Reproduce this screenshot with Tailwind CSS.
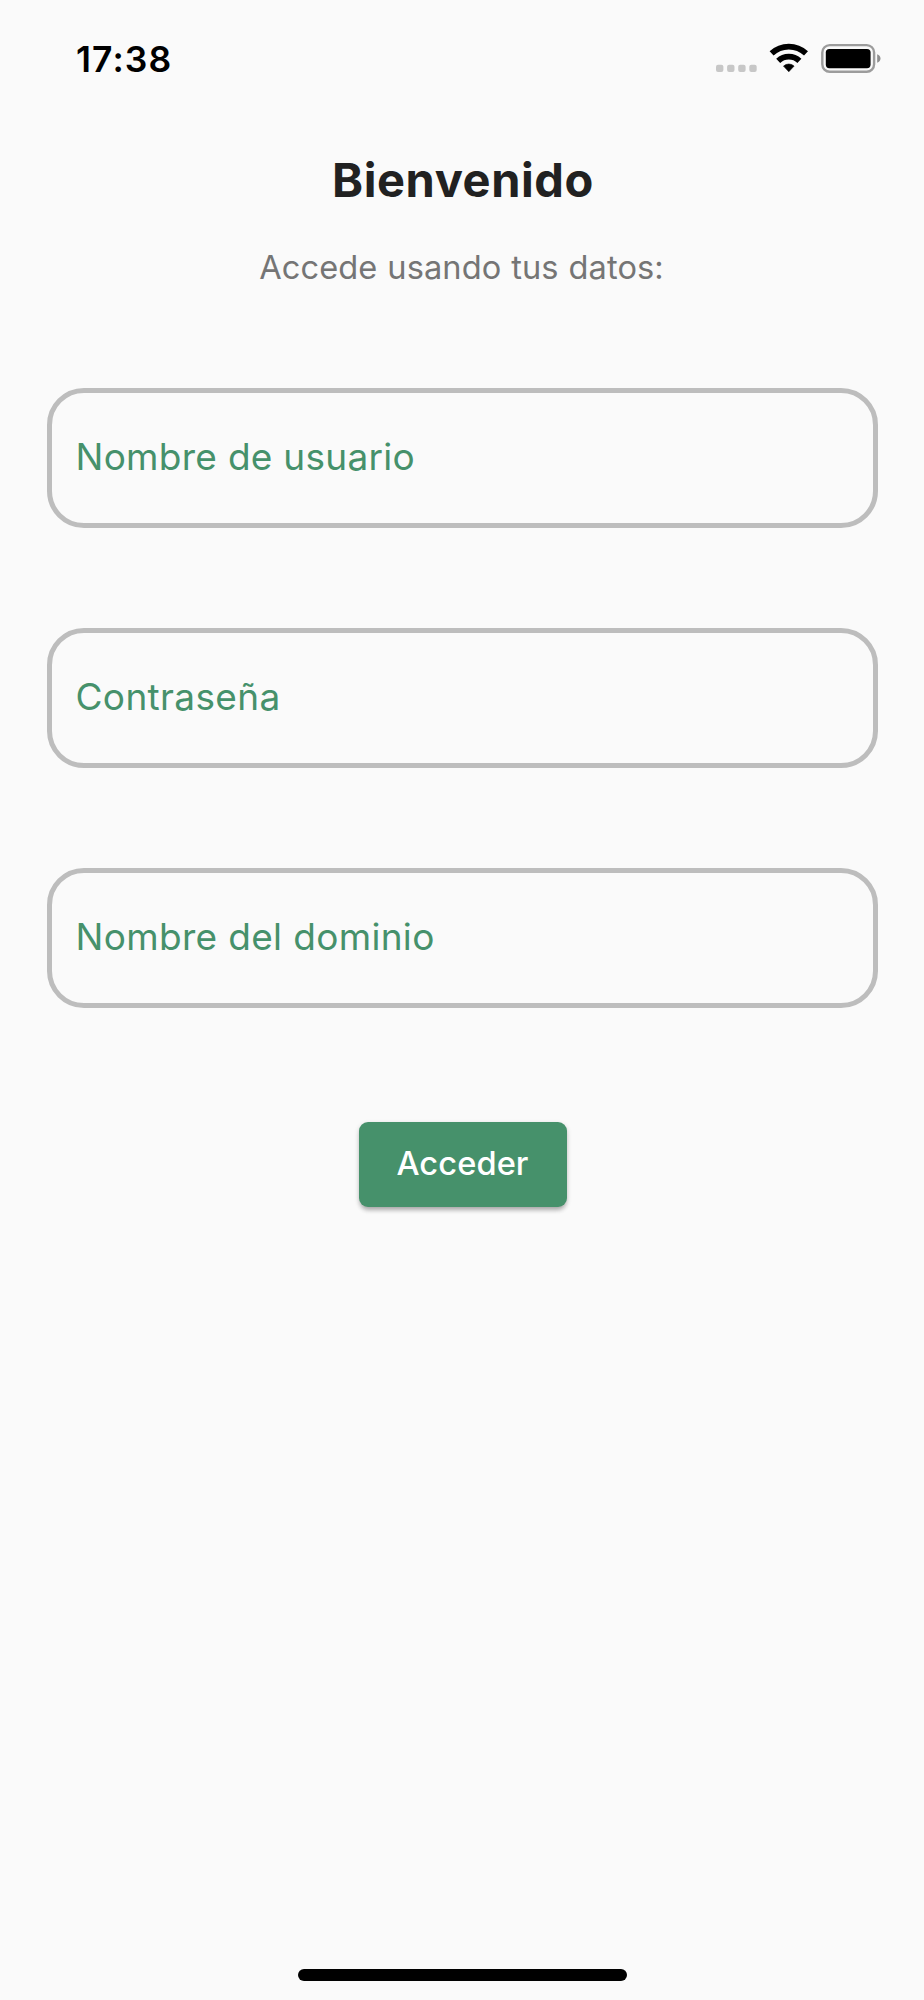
<!DOCTYPE html>
<html lang="es">
<head>
  <meta charset="UTF-8" />
  <meta name="viewport" content="width=device-width, initial-scale=1.0" />
  <title>Bienvenido</title>
  <script src="https://cdn.jsdelivr.net/npm/@tailwindcss/browser@4"></script>
</head>
<body class="bg-[#fafafa] font-['Inter',sans-serif]">
  <div class="flex flex-col w-full h-[2000px] overflow-hidden">

    <!-- Barra de estado -->
    <header class="flex items-center justify-between h-[118px] pl-[76px] pr-[42px]">
      <span class="pt-0.5 text-[35.5px] leading-none font-semibold tracking-[1.08px] text-black">17:38</span>
      <svg class="w-[166px] h-[30px] mb-0.5" viewBox="0 0 166 30">
        <!-- Señal -->
        <g fill="#c7c7c7">
          <rect x="0" y="21.7" width="7.4" height="7.3" rx="2" />
          <rect x="11.1" y="21.7" width="7.4" height="7.3" rx="2" />
          <rect x="22.2" y="21.7" width="7.4" height="7.3" rx="2" />
          <rect x="33.3" y="21.7" width="7.4" height="7.3" rx="2" />
        </g>
        <!-- Wifi -->
        <g fill="none" stroke="#000">
          <path d="M55.6 10.4a25.2 25.2 0 0 1 34.4 0" stroke-width="5.8" />
          <path d="M62.2 17.9a15.4 15.4 0 0 1 21.2 0" stroke-width="5.8" />
        </g>
        <path d="M72.8 28.7l-5.3-5.6a7.8 7.8 0 0 1 10.6 0z" fill="#000" stroke="#000" stroke-width=".6" stroke-linejoin="round" />
        <!-- Batería -->
        <rect x="106.3" y="2.1" width="51.8" height="26.6" rx="7.4" fill="none" stroke="#9c9c9c" stroke-width="2.4" />
        <rect x="109.8" y="5.9" width="44.8" height="19.3" rx="3.6" fill="#000" />
        <path d="M161.2 11.2c2.2.8 3.3 2.5 3.3 4.3s-1.1 3.5-3.3 4.3z" fill="#8f8f8f" />
      </svg>
    </header>

    <main class="flex flex-col items-center pl-[47px] pr-[46px]">
      <h1 class="mt-8 ml-px text-[47px] leading-[60px] font-bold tracking-[0.6px] text-[#212121]">Bienvenido</h1>
      <p class="mt-[37px] mr-[2px] text-[32.6px] leading-10 tracking-[0.1px] [word-spacing:0.6px] text-[#757575]">Accede usando tus datos:</p>

      <!-- Formulario -->
      <form class="flex flex-col items-center w-full mt-[101px]">
        <div class="flex flex-col gap-[100px] w-full">
          <label class="flex items-center h-[140px] pl-[23.5px] pb-[3px] border-5 border-[#bdbdbd] rounded-[37px] text-[37px] leading-none tracking-[0.28px] text-[#46916b]">Nombre de usuario</label>
          <label class="flex items-center h-[140px] pl-[23.5px] pb-[3px] border-5 border-[#bdbdbd] rounded-[37px] text-[37px] leading-none tracking-[0.34px] text-[#46916b]">Contraseña</label>
          <label class="flex items-center h-[140px] pl-[23.5px] pb-[3px] border-5 border-[#bdbdbd] rounded-[37px] text-[37px] leading-none tracking-[0.33px] text-[#46916b]">Nombre del dominio</label>
        </div>
        <button type="button" class="flex items-center justify-center w-[208px] h-[85px] mt-[114px] pb-[2px] rounded-[9px] bg-[#46916b] text-white text-[32.6px] leading-none font-medium tracking-[0.1px] shadow-[0_2px_5px_rgba(0,0,0,0.2),0_5px_5px_-2px_rgba(0,0,0,0.2)]">Acceder</button>
      </form>
    </main>

    <!-- Indicador de inicio -->
    <div class="w-[329px] h-3 mt-auto mb-[19px] mx-auto rounded-full bg-black"></div>
  </div>
</body>
</html>
